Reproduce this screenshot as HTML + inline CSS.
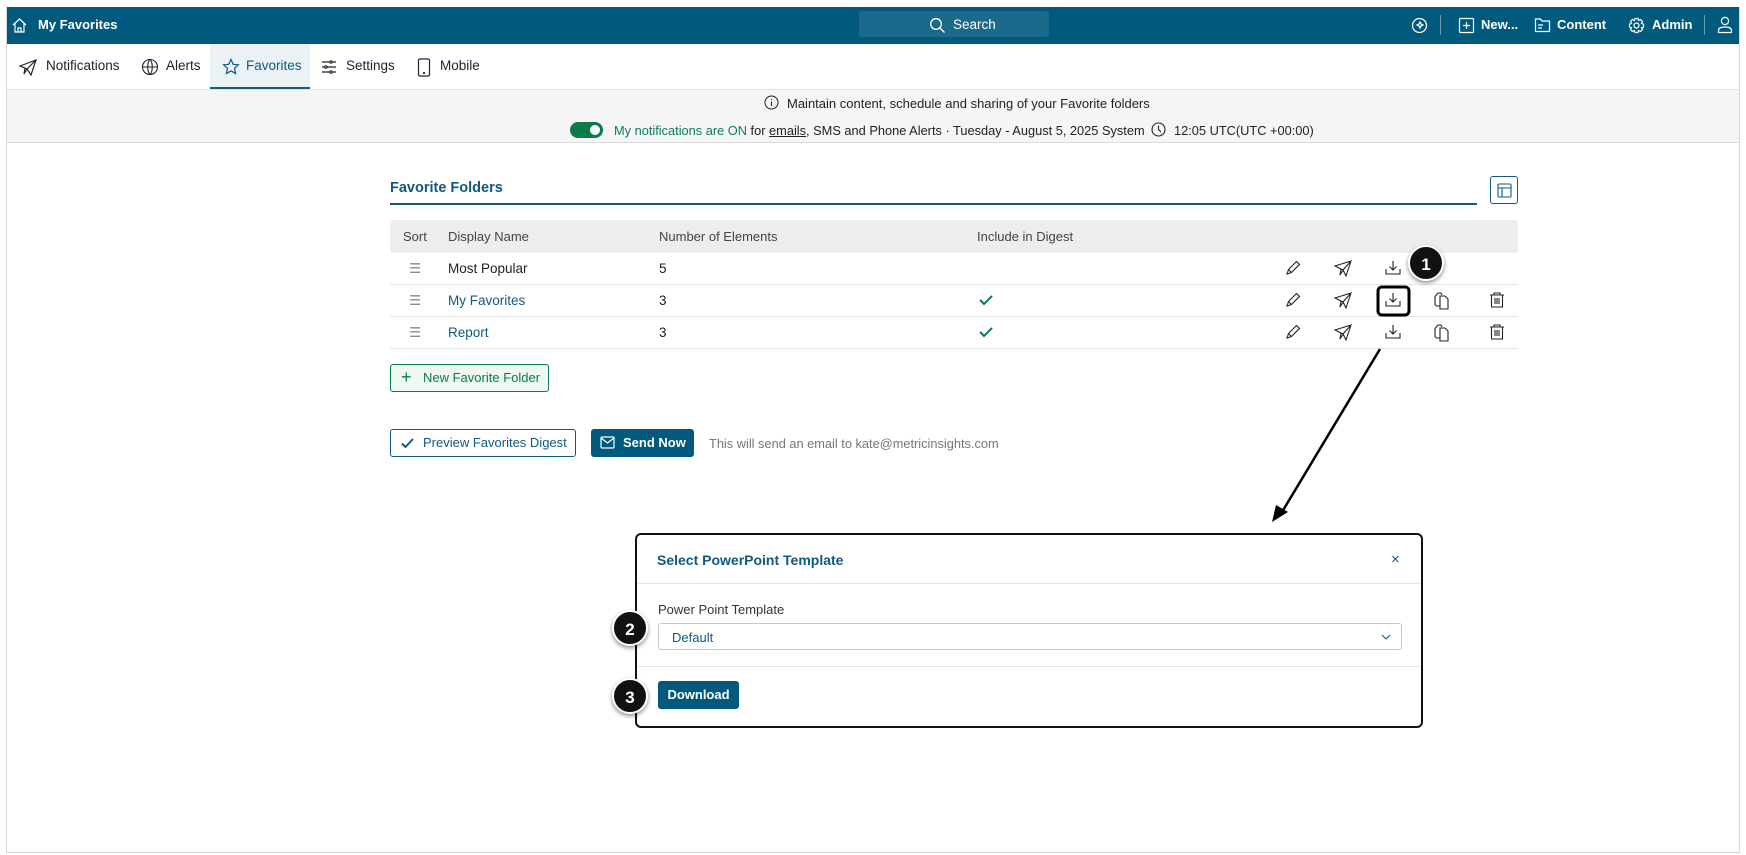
<!DOCTYPE html>
<html><head><meta charset="utf-8"><style>
*{box-sizing:border-box;margin:0;padding:0}
body{width:1746px;height:855px;background:#fff;font-family:"Liberation Sans",sans-serif;font-size:13.5px;color:#222;position:relative;overflow:hidden}
.a{position:absolute}
svg{display:block}
.frame{left:6px;top:6px;width:1734px;height:847px;border:1px solid #d8d8d8;border-top:none}
.hdr{left:7px;top:7px;width:1732px;height:37px;background:#015a7d;color:#fff}
.hdr .t{font-weight:bold;font-size:13px;top:10px}
.tabs span{position:absolute;top:58px;font-size:13.5px;color:#222}
.notice{left:7px;top:89px;width:1732px;height:54px;background:#f5f5f5;border-top:1px solid #e2e2e2;border-bottom:1px solid #ddd;font-size:13px}
.th{top:220px;left:390px;width:1128px;height:33px;background:#ededed;border-radius:3px}
.row{left:390px;width:1128px;height:32px;border-bottom:1px solid #e4e4e4}
.cell{position:absolute;top:8px}
.link{color:#0f5a7e}
.badge{width:36px;height:36px;border-radius:50%;background:#111;color:#fff;font-weight:bold;font-size:17px;text-align:center;line-height:36px;border:2px solid #fff;box-shadow:0 2px 4px rgba(0,0,0,.45)}
.btn{border-radius:3px;font-size:13px;line-height:26px;height:28px}
</style></head><body>
<div class="a frame"></div>
<div class="a hdr">
 <svg class="a" style="left:4px;top:10px" width="17" height="17" viewBox="0 0 17 17" fill="none" stroke="#fff" stroke-width="1.2"><path d="M2 8L8.5 2 15 8M4 6.5V15h9V6.5M7 15v-4h3v4"/></svg>
 <div class="a t" style="left:31px">My Favorites</div>
 <div class="a" style="left:852px;top:4px;width:190px;height:26px;background:#1a6b8b;border-radius:3px"></div>
 <svg class="a" style="left:922px;top:10px" width="17" height="17" viewBox="0 0 17 17" fill="none" stroke="#fff" stroke-width="1.3"><circle cx="7" cy="7" r="5.3"/><path d="M11 11l4.5 4.5"/></svg>
 <div class="a" style="left:946px;top:10px;font-size:13.5px">Search</div>
 <svg class="a" style="left:1404px;top:10px" width="17" height="17" viewBox="0 0 17 17" fill="none" stroke="#fff" stroke-width="1.2"><circle cx="8.5" cy="8.5" r="7"/><path d="M9 5l1 2 2 1-2 1-1 2-1-2-2-1 2-1z"/></svg>
 <div class="a" style="left:1433px;top:8px;width:1px;height:20px;background:#6d9ab0"></div>
 <svg class="a" style="left:1451px;top:10px" width="17" height="17" viewBox="0 0 17 17" fill="none" stroke="#fff" stroke-width="1.2"><rect x="1.5" y="1.5" width="14" height="14" rx="1"/><path d="M8.5 5v7M5 8.5h7"/></svg>
 <div class="a t" style="left:1474px">New...</div>
 <svg class="a" style="left:1527px;top:10px" width="17" height="16" viewBox="0 0 17 16" fill="none" stroke="#fff" stroke-width="1.2"><path d="M1.5 2h5l1.5 2h7.5v10.5h-14z M4 8h5M4 11h4"/></svg>
 <div class="a t" style="left:1550px">Content</div>
 <svg class="a" style="left:1621px;top:10px" width="17" height="17" viewBox="0 0 17 17" fill="none" stroke="#fff" stroke-width="1.2"><circle cx="8.5" cy="8.5" r="2.5"/><path d="M7 1.5h3l.5 2 2-1 2 2-1 2 2 .5v3l-2 .5 1 2-2 2-2-1-.5 2H7l-.5-2-2 1-2-2 1-2-2-.5V7l2-.5-1-2 2-2 2 1z"/></svg>
 <div class="a t" style="left:1645px">Admin</div>
 <div class="a" style="left:1697px;top:8px;width:1px;height:20px;background:#6d9ab0"></div>
 <svg class="a" style="left:1710px;top:9px" width="16" height="18" viewBox="0 0 16 18" fill="none" stroke="#fff" stroke-width="1.2"><circle cx="8" cy="5" r="3.6"/><path d="M1.5 16.5v-2c0-2 2-3.5 6.5-3.5s6.5 1.5 6.5 3.5v2z"/></svg>
</div>
<div class="tabs">
 <div class="a" style="left:210px;top:44px;width:100px;height:45px;background:#eaf2f5;border-bottom:2px solid #0f5a7e"></div>
 <svg class="a" style="left:19px;top:59px" width="18" height="17" viewBox="0 0 18 17" fill="none" stroke="#222" stroke-width="1.2"><path d="M1 7L17 1 12 16 8 10zM8 10l9-9M6 9l-1 6 3-5"/></svg>
 <span style="left:46px">Notifications</span>
 <svg class="a" style="left:141px;top:58px" width="18" height="18" viewBox="0 0 18 18" fill="none" stroke="#222" stroke-width="1.1"><circle cx="9" cy="9" r="7.5"/><path d="M1.5 9h15M9 1.5c-3 3-3 12 0 15M9 1.5c3 3 3 12 0 15"/></svg>
 <span style="left:166px">Alerts</span>
 <svg class="a" style="left:222px;top:58px" width="18" height="18" viewBox="0 0 18 18" fill="none" stroke="#0f5a7e" stroke-width="1.2"><path d="M9 1.5l2.2 4.8 5.2.5-3.9 3.5 1.1 5.2L9 12.8l-4.6 2.7 1.1-5.2L1.6 6.8l5.2-.5z"/></svg>
 <span style="left:246px;color:#0f5a7e">Favorites</span>
 <svg class="a" style="left:321px;top:59px" width="16" height="16" viewBox="0 0 16 16" fill="none" stroke="#222" stroke-width="1.2"><path d="M1 3h14M1 8h14M1 13h14"/><circle cx="10" cy="3" r="1.2" fill="#fff"/><circle cx="5" cy="8" r="1.2" fill="#fff"/><circle cx="10" cy="13" r="1.2" fill="#fff"/></svg>
 <span style="left:346px">Settings</span>
 <svg class="a" style="left:417px;top:58px" width="14" height="19" viewBox="0 0 14 19" fill="none" stroke="#222" stroke-width="1.2"><rect x="1.5" y="1" width="11" height="17" rx="1.5"/><circle cx="7" cy="15" r=".5" fill="#222"/></svg>
 <span style="left:440px">Mobile</span>
</div>
<div class="a notice">
 <svg class="a" style="left:757px;top:5px" width="15" height="15" viewBox="0 0 15 15" fill="none" stroke="#222" stroke-width="1"><circle cx="7.5" cy="7.5" r="6.5"/><path d="M7.5 6.5v4.5M7.5 4v1"/></svg>
 <div class="a" style="left:780px;top:6px">Maintain content, schedule and sharing of your Favorite folders</div>
 <div class="a" style="left:563px;top:32px;width:33px;height:16px;border-radius:8px;background:#0a7c4a"><div class="a" style="right:3px;top:3px;width:10px;height:10px;border-radius:50%;background:#fff"></div></div>
 <div class="a" style="left:607px;top:33px;white-space:nowrap;font-size:12.8px"><span style="color:#0a8050">My notifications are ON</span> for <u>emails</u>, SMS and Phone Alerts · Tuesday - August 5, 2025 System</div>
 <svg class="a" style="left:1144px;top:32px" width="15" height="15" viewBox="0 0 15 15" fill="none" stroke="#222" stroke-width="1.1"><circle cx="7.5" cy="7.5" r="6.5"/><path d="M7.5 3.5v4l2.5 2.5"/></svg>
 <div class="a" style="left:1167px;top:33px;font-size:12.8px">12:05 UTC(UTC +00:00)</div>
</div>

<div class="a" style="left:390px;top:180px;font-weight:bold;font-size:14.5px;color:#0f5a7e">Favorite Folders</div>
<div class="a" style="left:390px;top:203px;width:1087px;height:1.5px;background:#0f5a7e"></div>
<div class="a" style="left:1490px;top:176px;width:28px;height:28px;border:1px solid #0f5a7e;border-radius:3px"><svg class="a" style="left:6px;top:6px" width="15" height="15" viewBox="0 0 15 15" fill="none" stroke="#0f5a7e" stroke-width="1.1"><rect x="1" y="1" width="13" height="13" rx="1"/><path d="M1 5h13M5 5v9"/></svg></div>

<div class="a th">
 <div class="cell" style="left:13px;color:#444;font-size:13px;top:9px">Sort</div>
 <div class="cell" style="left:58px;color:#444;font-size:13px;top:9px">Display Name</div>
 <div class="cell" style="left:269px;color:#444;font-size:13px;top:9px">Number of Elements</div>
 <div class="cell" style="left:587px;color:#444;font-size:13px;top:9px">Include in Digest</div>
</div>

<div class="a row" style="top:253px"><div class="cell" style="left:19px;color:#888">☰</div><div class="cell" style="left:58px">Most Popular</div><div class="cell" style="left:269px">5</div></div>
<div class="a row" style="top:285px"><div class="cell" style="left:19px;color:#888">☰</div><div class="cell link" style="left:58px">My Favorites</div><div class="cell" style="left:269px">3</div></div>
<div class="a row" style="top:317px"><div class="cell" style="left:19px;color:#888">☰</div><div class="cell link" style="left:58px">Report</div><div class="cell" style="left:269px">3</div></div>

<svg class="a" style="left:0;top:0" width="1746" height="855" fill="none" stroke="#222" stroke-width="1.1">
 <defs>
  <g id="pen"><path d="M-6 6l1.5-4.5 8-8 3 3-8 8z M-4.5 1.5l3 3"/></g>
  <g id="pl"><path d="M-8 -2L8 -7 3 8 0 2zM0 2l8-9M-2 1l-1 6 3-5"/></g>
  <g id="dl"><path d="M0 -7v9M-3.5 -1.5L0 2 3.5 -1.5M-7 1v5h14V1"/></g>
  <g id="cp"><path d="M-2 -4h5l3 3v10h-8z M-2 6h-3.5l-1.5-1.5v-8L-4 -7h3l1 2"/></g>
  <g id="tr"><path d="M-7 -5h14M-3 -5v-2h6v2M-5.5 -5v12h11v-12M-2 -2v6M0 -2v6M2 -2v6"/></g>
 </defs>
 <use href="#pen" x="1293" y="268"/><use href="#pl" x="1343" y="268"/><use href="#dl" x="1393" y="268"/>
 <use href="#pen" x="1293" y="300"/><use href="#pl" x="1343" y="300"/><use href="#dl" x="1393" y="300"/><use href="#cp" x="1442" y="300"/><use href="#tr" x="1497" y="300"/>
 <use href="#pen" x="1293" y="332"/><use href="#pl" x="1343" y="332"/><use href="#dl" x="1393" y="332"/><use href="#cp" x="1442" y="332"/><use href="#tr" x="1497" y="332"/>
 <path d="M980 300l4 4 8-8M980 332l4 4 8-8" stroke="#0a7c4a" stroke-width="2"/>
 <rect x="1378" y="287" width="31" height="28" rx="4" stroke="#000" stroke-width="3"/>
 <path d="M1380 349L1282 512" stroke="#000" stroke-width="2.5"/>
 <path d="M1272 522l4-17 12 7z" fill="#000" stroke="none"/>
</svg>
<div class="a badge" style="left:1408px;top:245px">1</div>

<div class="a btn" style="left:390px;top:364px;width:159px;border:1px solid #0a7c4a;background:#eef7f2;color:#0a7c4a;height:28px"><span style="position:absolute;left:10px;top:-1px;font-size:18px">+</span><span style="position:absolute;left:32px;top:0">New Favorite Folder</span></div>
<div class="a btn" style="left:390px;top:429px;width:186px;border:1px solid #0f5a7e;color:#0f5a7e"><svg class="a" style="left:10px;top:8px" width="13" height="11" viewBox="0 0 13 11" fill="none" stroke="#0f5a7e" stroke-width="2"><path d="M1 5.5l3.5 3.5L12 1"/></svg><span style="position:absolute;left:32px;top:0">Preview Favorites Digest</span></div>
<div class="a btn" style="left:591px;top:429px;width:103px;background:#015a7d;color:#fff;font-weight:bold"><svg class="a" style="left:9px;top:7px" width="15" height="13" viewBox="0 0 15 13" fill="none" stroke="#fff" stroke-width="1.2"><rect x="1" y="1" width="13" height="11" rx="1"/><path d="M1 2l6.5 5 6.5-5"/></svg><span style="position:absolute;left:32px;top:1px">Send Now</span></div>
<div class="a" style="left:709px;top:436px;color:#777;font-size:12.8px">This will send an email to kate@metricinsights.com</div>

<div class="a" style="left:635px;top:533px;width:788px;height:195px;border:2px solid #111;border-radius:6px;background:#fff">
 <div class="a" style="left:20px;top:17px;font-weight:bold;font-size:14px;color:#0f5a7e">Select PowerPoint Template</div>
 <div class="a" style="left:754px;top:16px;color:#0f5a7e;font-size:15px">×</div>
 <div class="a" style="left:0;top:48px;width:784px;height:1px;background:#e6e6e6"></div>
 <div class="a" style="left:21px;top:67px;font-size:13px;color:#333">Power Point Template</div>
 <div class="a" style="left:21px;top:88px;width:744px;height:27px;border:1px solid #c8c8c8;border-radius:3px"><span style="position:absolute;left:13px;top:6px;color:#0f5a7e;font-size:13px">Default</span><svg class="a" style="right:10px;top:10px" width="10" height="6" viewBox="0 0 10 6" fill="none" stroke="#0f5a7e" stroke-width="1.1"><path d="M1 1l4 4 4-4"/></svg></div>
 <div class="a" style="left:0;top:131px;width:784px;height:1px;background:#e6e6e6"></div>
 <div class="a btn" style="left:21px;top:146px;width:81px;background:#015a7d;color:#fff;text-align:center;font-weight:bold;line-height:28px">Download</div>
</div>
<div class="a badge" style="left:612px;top:610px">2</div>
<div class="a badge" style="left:612px;top:678px">3</div>
</body></html>
